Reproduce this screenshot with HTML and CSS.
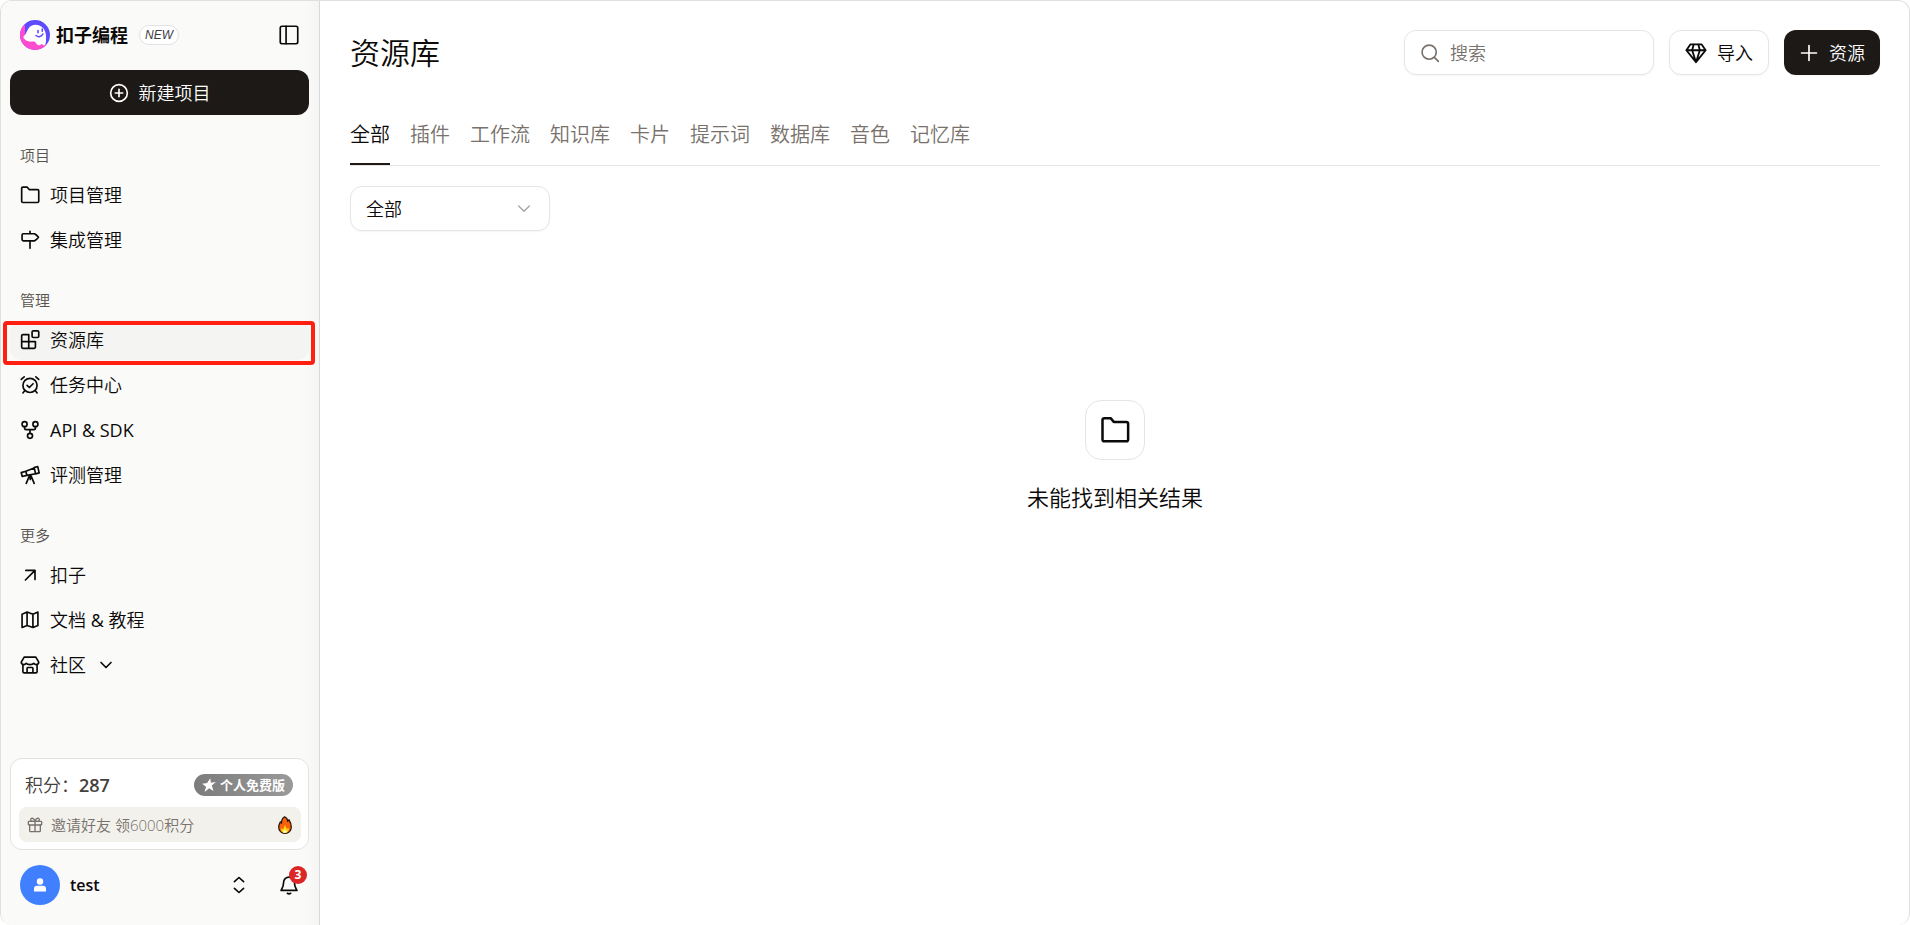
FILE: index.html
```
<!DOCTYPE html>
<html lang="zh-CN">
<head>
  <meta charset="UTF-8">
  <meta name="viewport" content="width=device-width, initial-scale=1.0">
  <title>资源库 - 扣子编程</title>
  <link rel="stylesheet" href="styles.css">
</head>

<body>
<div class="app">

  <aside class="sidebar">
    <header class="brand">
      <svg class="logo" viewBox="0 0 30 30">
        <defs><clipPath id="round"><circle cx="15" cy="15" r="15"/></clipPath></defs>
        <g clip-path="url(#round)">
          <rect width="30" height="30" fill="#5f4bff"/>
          <path d="M0 7 L5 5 L5 17 L25 24 L27 25 L20 30 L0 30Z" fill="#ff4bd0"/>
        </g>
        <path d="M3.5 16.5 C5.5 15.5 6.3 12 8.5 8.5 C11 4.3 16 3.8 20 5.7 C25.5 8.5 26.5 14 26 20 C26 23 25.5 25.3 23.8 25.3 C22 25.3 22.8 23.3 21 24.4 C18.7 26.2 17 24.8 15.8 22.7 C14.2 20.5 11.8 22.1 9.5 21.6 C5.5 20.9 2.8 18 3.5 16.5Z" fill="#fff"/>
        <g fill="none" stroke="#5f4bff" stroke-width="1.6" stroke-linecap="round"><path d="M18 10.5v2.3M22.3 9v2.3"/><path d="M16 15.5c2.5 2.3 5.5 1 6.8-1.5"/></g>
      </svg>
      <span class="brand-name">扣子编程</span>
      <span class="new">NEW</span>
      <button class="icon-btn collapse" aria-label="收起侧边栏">
        <svg class="icon" viewBox="0 0 24 24"><rect x="1.5" y="1.500" width="21" height="21" rx="2"/><path d="M8.500 1.500v21"/></svg>
      </button>
    </header>

    <button class="create">
      <svg class="icon" viewBox="0 0 24 24"><circle cx="12" cy="12" r="10"/><path d="M12 7.5v9M7.5 12h9"/></svg>
      新建项目
    </button>

    <nav class="menu">
      <h2>项目</h2>
      <a href="#">
        <svg class="icon" viewBox="0 0 24 24"><path d="M2 4a1.5 1.5 0 0 1 1.5-1.5h5L11 5.500h10A1.500 1.500 0 0 1 22.500 7v12.500a1.500 1.500 0 0 1-1.500 1.500H3.500A1.500 1.500 0 0 1 2 19.500Z"/></svg>
        项目管理
      </a>
      <a href="#">
        <svg class="icon" viewBox="0 0 24 24"><path d="M12 1.500v3M12 13v9M4 4.500h13.500q2.500 1.500 4.700 4.200q-2.200 2.800-4.700 4.300H4a1.500 1.500 0 0 1-1.500-1.500V6A1.500 1.500 0 0 1 4 4.500Z"/></svg>
        集成管理
      </a>

      <h2>管理</h2>
      <a href="#" class="active" aria-current="page">
        <svg class="icon" viewBox="0 0 24 24"><rect x="14.500" y="1" width="8" height="8" rx="1.500"/><path d="M10.500 5.500H3.500A1.500 1.500 0 0 0 2 7v13.500A1.500 1.500 0 0 0 3.500 22H17a1.500 1.500 0 0 0 1.500-1.500V14H2M10.500 5.500V22"/></svg>
        资源库
      </a>
      <a href="#">
        <svg class="icon" viewBox="0 0 24 24"><circle cx="12" cy="12.500" r="8.500"/><path d="M8.500 12.500l2.700 2.500 4.500-4.500M5.800 18.700L3.500 21.500M18.200 18.700l2.300 2.800M1.500 5.200L5 2.200M22.500 5.200L19 2.200"/></svg>
        任务中心
      </a>
      <a href="#">
        <svg class="icon" viewBox="0 0 24 24"><circle cx="5.500" cy="5" r="3"/><circle cx="18.500" cy="5" r="3"/><circle cx="12" cy="19" r="3"/><path d="M5.500 8v1.500a2 2 0 0 0 2 2h9a2 2 0 0 0 2-2V8M12 11.500V16"/></svg>
        <span class="latin">API &amp; SDK</span>
      </a>
      <a href="#">
        <svg class="icon" viewBox="0 0 24 24"><path d="M17 3l4.300-1.100L23 9.500l-4.300 1.100ZM17 3.500L7 7.500l1.300 5 10.400-2M7 7.500L1.500 9.200l1.200 4.600 5.600-1.300M11.500 12.500L7.500 22M13 12.500l4 9.500M12.300 13v4.500"/></svg>
        评测管理
      </a>

      <h2>更多</h2>
      <a href="#">
        <svg class="icon" viewBox="0 0 24 24"><path d="M7 6.500h11v11M18 6.500L6.500 18"/></svg>
        扣子
      </a>
      <a href="#">
        <svg class="icon" viewBox="0 0 24 24"><path d="M2.500 5L8.500 2.500l7 2.500 6-2.500V18.500L15.500 21l-7-2.500-6 2.500ZM8.500 2.500v16M15.500 5v16"/></svg>
        <span>文档 <span class="latin">&amp;</span> 教程</span>
      </a>
      <a href="#">
        <svg class="icon" viewBox="0 0 24 24"><path d="M5 2.500h14l3.500 6c0 1.800-1.300 3-3 3-1.500 0-2.300-.6-3-1.500-.8 1-2.300 1.500-4.500 1.500S8.300 11 7.500 10c-.7.900-1.500 1.500-3 1.500-1.700 0-3-1.200-3-3ZM3.500 11.500V20A1.500 1.500 0 0 0 5 21.500h14a1.500 1.500 0 0 0 1.500-1.500v-8.500M8.500 21.500V16a1 1 0 0 1 1-1h5a1 1 0 0 1 1 1v5.500"/></svg>
        社区
        <svg class="icon" viewBox="0 0 24 24"><path d="M6 9l6 6 6-6"/></svg>
      </a>
    </nav>

    <section class="credits">
      <div class="credits-top">
        <span>积分：<b>287</b></span>
        <span class="plan">
          <svg class="star" viewBox="0 0 14 14"><path d="M8.300.2l.6 4.600 4.900-.7-4 3.500 1.700 5.400-4.300-2.700L2.500 14l1.600-5.200L.2 5.800l4.900-.7Z" fill="#fff"/></svg>
          个人免费版
        </span>
      </div>
      <a href="#" class="invite">
        <svg class="icon gift" viewBox="0 0 24 24"><rect x="2" y="6.500" width="20" height="5.500" rx="1"/><path d="M4 12v8.500A1.500 1.500 0 0 0 5.500 22h13a1.500 1.500 0 0 0 1.500-1.500V12M12 6.500V22M12 6.500C10.500 1 5.500.500 5.500 4c0 1.500 1 2.500 2.500 2.500ZM12 6.500C13.500 1 18.500.500 18.500 4c0 1.500-1 2.500-2.500 2.500Z"/></svg>
        邀请好友 领6000积分
        <svg class="fire" viewBox="0 0 14 18"><path d="M6.500.8C8.500 1.500 9.500 3 9.800 5.200l1.200-1.400c1.500 2.200 2.300 4.700 2.300 7.200 0 3.800-2.600 6.300-6.300 6.300S.7 14.800.7 11c0-2.500 1-3.600 1.600-5l1.200 1C3.500 4.500 4.500 2 6.500.8Z" fill="#f8600c" stroke="#1c1008" stroke-width="1.200"/><path d="M7 17c-2.800 0-4.200-1.800-4-4.800l2 1L7 9l1.800 4 1.800-1.200C11.200 15 9.700 17 7 17Z" fill="#ffd414"/><path d="M7 17c-1.300 0-2-.8-2-2l1 .2L7 13l1 2 1-.2C9 16.200 8.300 17 7 17Z" fill="#fff6b0"/></svg>
      </a>
    </section>

    <footer class="user">
      <span class="avatar">
        <svg viewBox="0 0 14 14"><circle cx="7" cy="3.500" r="3.200" fill="#fff"/><path d="M1 13.500V11a3.200 3.200 0 0 1 3.200-3.200h5.600A3.200 3.200 0 0 1 13 11v2.500Z" fill="#fff"/></svg>
      </span>
      <span class="user-name">test</span>
      <button class="icon-btn" aria-label="切换账号">
        <svg class="icon" viewBox="0 0 24 24"><path d="M6.500 8L12 3l5.500 5M6.500 16l5.500 5 5.500-5"/></svg>
      </button>
      <button class="icon-btn bell" aria-label="通知">
        <svg class="icon" viewBox="0 0 24 24"><path d="M12 2.500A6.500 6.500 0 0 0 5.500 9c0 5-1.200 6.500-3 9.500h19c-1.800-3-3-4.500-3-9.500A6.500 6.500 0 0 0 12 2.500ZM10 22q2 1.200 4 0"/></svg>
        <span class="count">3</span>
      </button>
    </footer>
  </aside>

  <main class="content">
    <header class="top">
      <h1>资源库</h1>
      <label class="search">
        <svg class="icon" viewBox="0 0 24 24"><circle cx="11" cy="11" r="8.500"/><path d="M17.300 17.300L22 22"/></svg>
        <input type="text" placeholder="搜索" aria-label="搜索">
      </label>
      <button class="btn">
        <svg class="icon gem" viewBox="0 0 24 24"><path d="M6 2.500h12L22.500 9 12 22 1.500 9ZM1.500 9h21M9.500 2.500L7.800 9 12 22l4.200-13-1.700-6.500"/></svg>
        导入
      </button>
      <button class="btn dark">
        <svg class="icon" viewBox="0 0 24 24"><path d="M12 3v18M3 12h18"/></svg>
        资源
      </button>
    </header>

    <nav class="tabs">
      <a href="#" class="current">全部</a>
      <a href="#">插件</a>
      <a href="#">工作流</a>
      <a href="#">知识库</a>
      <a href="#">卡片</a>
      <a href="#">提示词</a>
      <a href="#">数据库</a>
      <a href="#">音色</a>
      <a href="#">记忆库</a>
    </nav>

    <div class="filter">
      <select aria-label="筛选">
        <option>全部</option>
      </select>
      <svg class="icon" viewBox="0 0 24 24"><path d="M4 7.500l8 8 8-8"/></svg>
    </div>

    <section class="empty">
      <div class="empty-icon">
        <svg class="icon" viewBox="0 0 24 24"><path d="M2 4a1.500 1.500 0 0 1 1.500-1.500h5L11 5.500h10A1.500 1.500 0 0 1 22.500 7v12.500a1.500 1.500 0 0 1-1.500 1.500H3.500A1.500 1.500 0 0 1 2 19.500Z"/></svg>
      </div>
      <p>未能找到相关结果</p>
    </section>
  </main>

</div>
</body>
</html>
```

FILE: styles.css
```
* {
  box-sizing: border-box;
}

body {
  margin: 0;
  font-family: "Open Sans", "Noto Sans CJK SC", sans-serif;
  font-size: 18px;
  font-weight: 350;
  line-height: 24px;
  color: #0c0a09;
  background: white;
}

h1, h2, p {
  margin: 0;
  font-weight: 350;
}

a {
  color: inherit;
  text-decoration: none;
}

button, input, select {
  font: inherit;
  color: inherit;
  cursor: pointer;
}

.icon {
  width: 20px;
  height: 20px;
  flex: none;
  fill: none;
  stroke: currentColor;
  stroke-width: 2;
  stroke-linecap: round;
  stroke-linejoin: round;
}

.latin {
  font-weight: 400;
}

.app {
  display: flex;
  min-height: 100vh;
  border: 1px solid #e0e0e0;
  border-bottom: none;
  border-radius: 12px;
  overflow: hidden;
}

/* sidebar */
.sidebar {
  width: 319px;
  flex: none;
  display: flex;
  flex-direction: column;
  padding: 9px 10px 20px 9px;
  background: linear-gradient(to right, #fafaf9 305px, #f5f5f4);
  border-right: 1px solid #d9d9d9;
}

.brand {
  display: flex;
  align-items: center;
  height: 50px;
  margin-bottom: 10px;
  padding: 0 10px;
}

.logo {
  width: 30px;
  height: 30px;
}

.brand-name {
  margin-left: 6px;
  font-weight: 700;
}

.new {
  margin-left: 11px;
  width: 40px;
  height: 20px;
  border: 1px solid #e2e2e4;
  border-radius: 10px;
  background: white;
  color: #3c3c44;
  font-family: "Liberation Sans", sans-serif;
  font-size: 12px;
  font-style: italic;
  font-weight: 400;
  line-height: 18px;
  text-align: center;
}

.icon-btn {
  display: flex;
  padding: 0;
  border: none;
  background: none;
}

.collapse {
  margin-left: auto;
}

.create {
  display: flex;
  align-items: center;
  justify-content: center;
  gap: 10px;
  height: 45px;
  margin-bottom: 25px;
  border: none;
  border-radius: 12px;
  background: #1c1917;
  color: white;
}

.menu {
  display: flex;
  flex-direction: column;
  gap: 5px;
}

.menu h2 {
  padding: 0 10px;
  font-size: 15px;
  line-height: 30px;
  color: #57534e;
}

.menu a + h2 {
  margin-top: 20px;
}

.menu a {
  position: relative;
  display: flex;
  align-items: center;
  gap: 10px;
  height: 40px;
  padding: 0 10px;
  border-radius: 12px;
}

.menu .active {
  background: #f4f4f3;
}

/* red frame lying over the active item */
.menu .active::after {
  content: "";
  position: absolute;
  top: 1px;
  right: -6px;
  bottom: -5px;
  left: -7px;
  border: 4px solid #ff2012;
  border-radius: 4px;
}

.credits {
  margin-top: auto;
  padding: 14px 7px 7px 8px;
  border: 1px solid #e2e2e2;
  border-radius: 12px;
  background: white;
}

.credits-top {
  display: flex;
  align-items: center;
  justify-content: space-between;
  height: 24px;
  margin-bottom: 10px;
  padding: 0 8px 0 6px;
  color: #44403c;
}

.credits b {
  font-weight: 600;
}

.plan {
  display: flex;
  align-items: center;
  gap: 4px;
  height: 22px;
  padding: 0 8px;
  border-radius: 11px;
  background: linear-gradient(to right, #7c7c7c, #9a9a9a);
  color: white;
  font-size: 13px;
  font-weight: 700;
}

.star {
  width: 14px;
  height: 14px;
}

.invite {
  display: flex;
  align-items: center;
  gap: 8px;
  height: 35px;
  padding: 0 9px 0 8px;
  border-radius: 8px;
  background: #f2f1ec;
  color: #78716c;
  font-size: 15px;
}

.gift {
  width: 16px;
  height: 16px;
}

.fire {
  width: 14px;
  height: 18px;
  margin-left: auto;
}

.user {
  display: flex;
  align-items: center;
  gap: 10px;
  margin-top: 15px;
  padding: 0 10px;
}

.avatar {
  display: flex;
  align-items: center;
  justify-content: center;
  width: 40px;
  height: 40px;
  border-radius: 50%;
  background: #4080ff;
}

.avatar svg {
  width: 14px;
  height: 14px;
}

.user-name {
  flex: 1;
  font-size: 16px;
  font-weight: 600;
}

.bell {
  position: relative;
  margin-left: 20px;
}

.count {
  position: absolute;
  top: -9px;
  right: -8px;
  width: 18px;
  height: 18px;
  border-radius: 50%;
  background: #dc2626;
  color: white;
  font-size: 12px;
  font-weight: 700;
  line-height: 18px;
  text-align: center;
}

/* main */
.content {
  flex: 1;
  display: flex;
  flex-direction: column;
  padding: 29px 29px 29px 30px;
}

.top {
  display: flex;
  align-items: center;
  gap: 15px;
  height: 45px;
}

.top h1 {
  flex: 1;
  font-size: 30px;
  line-height: 45px;
}

.search, .btn {
  display: flex;
  align-items: center;
  height: 45px;
  border: 1px solid #e5e5e5;
  border-radius: 12px;
  background: white;
  box-shadow: 0 1px 2px rgba(0, 0, 0, 0.04);
}

.search {
  width: 250px;
  gap: 10px;
  padding: 0 15px;
  color: #78716c;
}

.search input {
  flex: 1;
  min-width: 0;
  padding: 0;
  border: none;
  outline: none;
  background: none;
  cursor: text;
}

.search input::placeholder {
  color: #78716c;
  opacity: 1;
}

.btn {
  gap: 10px;
  padding: 0 15px;
}

.dark {
  border: none;
  background: #1c1917;
  color: white;
}

.gem {
  width: 22px;
  height: 22px;
}

.tabs {
  display: flex;
  gap: 20px;
  margin-top: 30px;
  border-bottom: 1px solid #e5e5e5;
  color: #78716c;
  font-size: 20px;
}

.tabs a {
  height: 60px;
  line-height: 60px;
}

.tabs .current {
  border-bottom: 2px solid #1c1917;
  color: #0c0a09;
}

.filter {
  display: grid;
  align-items: center;
  width: 200px;
  margin-top: 20px;
}

.filter select, .filter .icon {
  grid-area: 1 / 1;
}

.filter select {
  height: 45px;
  padding: 0 15px;
  border: 1px solid #e5e5e5;
  border-radius: 12px;
  background: white;
  box-shadow: 0 1px 2px rgba(0, 0, 0, 0.04);
  appearance: none;
}

.filter .icon {
  width: 16px;
  height: 16px;
  margin-right: 18px;
  justify-self: end;
  color: #a8a29e;
  pointer-events: none;
}

.empty {
  display: flex;
  flex-direction: column;
  align-items: center;
  gap: 19px;
  margin-top: 169px;
}

.empty-icon {
  display: flex;
  align-items: center;
  justify-content: center;
  width: 60px;
  height: 60px;
  border: 1px solid #e5e5e5;
  border-radius: 16px;
}

.empty-icon .icon {
  width: 30px;
  height: 30px;
}

.empty p {
  font-size: 22px;
  line-height: 36px;
}
```
